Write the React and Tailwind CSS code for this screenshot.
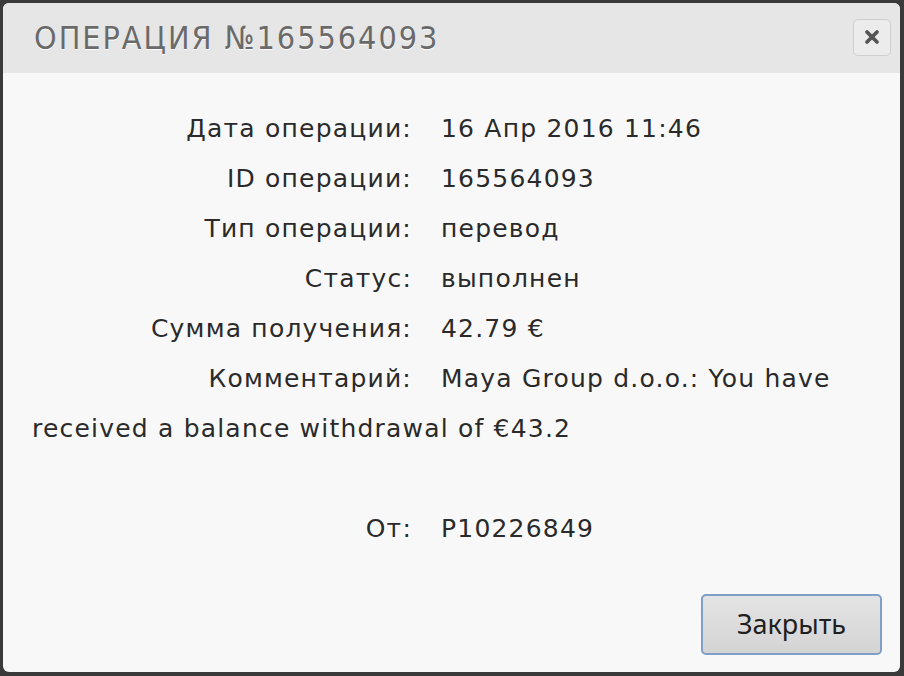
import { X } from "lucide-react";

const ROWS = [
  { label: "Дата операции:", value: "16 Апр 2016 11:46" },
  { label: "ID операции:", value: "165564093" },
  { label: "Тип операции:", value: "перевод" },
  { label: "Статус:", value: "выполнен" },
  { label: "Сумма получения:", value: "42.79 €" },
];

function Row({ label, children }) {
  return (
    <p className="leading-[50px]">
      <span className="inline-block w-[380px] text-right">{label}</span>
      <span className="ml-[29px]">{children}</span>
    </p>
  );
}

export default function App() {
  return (
    <div className="h-[676px] w-[904px] bg-[#3a3a3a] pl-[3px] pr-[4px] pt-[3px] pb-[4px]">
      <div className="flex h-full flex-col overflow-hidden rounded-[6px] bg-[#f8f8f8]">
        <header className="flex h-[70px] shrink-0 items-center justify-between bg-[#e6e6e6] pl-[31px] pr-[9px]">
          <h1
            className="text-[32px] uppercase tracking-[2px] text-[#6a6a6a] [text-shadow:0_1px_0_#fff]"
            style={{ fontFamily: '"DejaVu Sans Condensed", "DejaVu Sans", sans-serif' }}
          >
            Операция №165564093
          </h1>
          <button
            type="button"
            className="mb-[2px] flex h-[37px] w-[38px] items-center justify-center rounded-[5px] border border-[#cfcfcf] bg-[#ececec] text-[#555]"
          >
            <X className="h-[20px] w-[20px]" strokeWidth={4.5} />
          </button>
        </header>

        <main
          className="flex flex-1 flex-col pl-[29px] pr-[18px] pt-[31px] text-[25px] tracking-[1.2px] text-[#2a2a2a]"
          style={{ fontFamily: '"DejaVu Sans", "Noto Sans", sans-serif' }}
        >
          {ROWS.map((r) => (
            <Row key={r.label} label={r.label}>
              {r.value}
            </Row>
          ))}
          <Row label="Комментарий:">
            Maya Group d.o.o.: You have received a balance withdrawal of €43.2
          </Row>
          <p className="leading-[50px]">&nbsp;</p>
          <Row label="От:">P10226849</Row>

          <div className="mt-auto flex justify-end pb-[17px]">
            <button
              type="button"
              className="h-[61px] w-[181px] rounded-[5px] border-2 border-[#7f9fc9] bg-gradient-to-b from-[#e4e4e4] to-[#d4d4d4] text-[27px] tracking-normal text-[#1f1f1f]"
              style={{ fontFamily: '"Noto Sans", sans-serif' }}
            >
              Закрыть
            </button>
          </div>
        </main>
      </div>
    </div>
  );
}
